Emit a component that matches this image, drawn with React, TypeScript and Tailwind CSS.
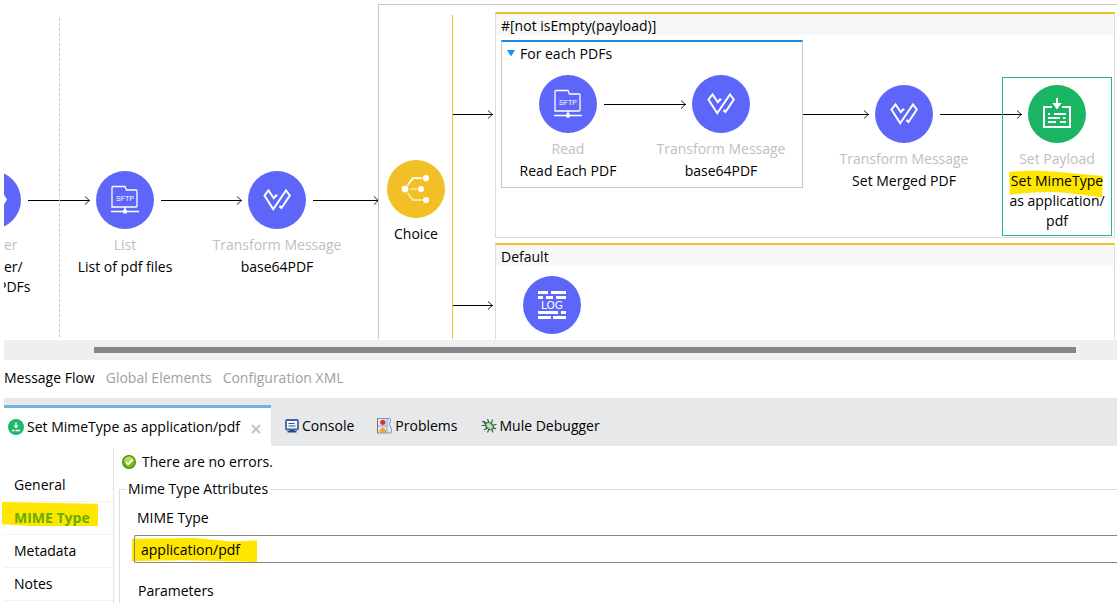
import { useState, type ReactNode } from 'react';
import clsx from 'clsx';

function SftpIcon() {
  return (
    <svg viewBox="0 0 58 58" className="size-full" fill="none" stroke="white">
      <path d="M16 36V16.5a1 1 0 0 1 1-1h12l1.5 3.5H40a1 1 0 0 1 1 1V35a1 1 0 0 1-1 1Z" strokeWidth="1.3" />
      <path d="M29 36v3M15 40.5h28" strokeWidth="1.6" />
      <circle cx="29" cy="40.5" r="2.2" fill="white" stroke="none" />
      <text
        x="29"
        y="30"
        fontSize="7"
        textAnchor="middle"
        fill="white"
        stroke="none"
        fontFamily="'Liberation Sans', sans-serif"
      >
        SFTP
      </text>
    </svg>
  );
}

function TransformIcon() {
  return (
    <svg viewBox="0 0 58 58" className="size-full" fill="none" stroke="white" strokeWidth="2">
      <path d="M28.5 24 25.8 27.2 20.5 19.5 16.5 24.5 25.2 38.3 38 19.5 41.8 24.5 33.5 37 32 35.5" />
      <circle cx="28.3" cy="24.6" r="1.2" fill="white" stroke="none" />
      <circle cx="32.3" cy="35.6" r="1.2" fill="white" stroke="none" />
    </svg>
  );
}

function ChoiceIcon() {
  return (
    <svg viewBox="0 0 58 58" className="size-full" fill="none" stroke="white" strokeWidth="1.8">
      <path d="M20.5 25 26 18.2h9" />
      <path d="M23 29h7" opacity="0.5" />
      <path d="M20.5 33 26 40h9" opacity="0.6" />
      <g fill="white" stroke="none">
        <circle cx="18" cy="29" r="3.4" />
        <circle cx="34" cy="29" r="3" />
        <circle cx="39" cy="18.2" r="3.1" />
        <circle cx="39" cy="40" r="3.1" />
      </g>
    </svg>
  );
}

function LogIcon() {
  return (
    <svg viewBox="0 0 58 58" className="size-full" fill="white">
      <path d="M15 15h10v3H15zM28 15h15v3H28zM15 20h5v3h-5zM23 20h7v3h-7zM33 20h10v3H33z" />
      <path d="M15 35h20v3H15zM38 35h5v3h-5zM15 40h13v3H15zM30 40h13v3H30z" />
      <text x="29" y="33" fontSize="10.5" textAnchor="middle" fontFamily="'DejaVu Sans', sans-serif">
        LOG
      </text>
    </svg>
  );
}

function PayloadIcon() {
  return (
    <svg viewBox="0 0 58 58" className="size-full" fill="none" stroke="white">
      <path d="M24 22h-8v20h26V22h-8" strokeWidth="2" />
      <path d="M29 13v6" strokeWidth="2" />
      <path d="M24.3 18h9.4L29 24.5Z" fill="white" stroke="none" />
      <path d="M20 29h2M26 29h12M20 33h12M35 33h2.5M20 37h8M32 37h6" strokeWidth="1.8" />
    </svg>
  );
}

function ListenerIcon() {
  return (
    <svg viewBox="0 0 58 58" className="size-full" fill="white">
      <path d="M36 28h4v-6l4 6.5-4 6.5v-5h-4z" />
    </svg>
  );
}

interface FlowNodeProps {
  className?: string;
  color?: string;
  icon: ReactNode;
  type?: string;
  name?: ReactNode;
  selected?: boolean;
}

// Labels are wider than the circle and spill evenly over both sides
function FlowNode({ className, color = 'bg-[#5e66f9]', icon, type, name, selected }: FlowNodeProps) {
  return (
    <div
      className={clsx(
        'relative flex w-[58px] shrink-0 flex-col items-center text-center whitespace-nowrap',
        className
      )}
    >
      <div className={clsx('size-[58px] rounded-full', color)}>{icon}</div>
      {type && <div className="mt-1.5 -mb-1 leading-5 text-[#c0c0c0]">{type}</div>}
      {name && <div className="relative isolate mt-1.5 leading-5">{name}</div>}
      {selected && <div className="absolute -inset-x-[26px] -top-2 -bottom-[5px] border border-[#1ab69e]" />}
    </div>
  );
}

function Arrow({ className }: { className: string }) {
  return (
    <div className={clsx('flex h-[59px] shrink-0 items-center', className)}>
      <div className="h-px flex-1 bg-black" />
      <svg viewBox="0 0 6 9" className="-ml-1.5 h-[9px] w-1.5" fill="none" stroke="#222">
        <path d="M1 .5 5.3 4.5 1 8.5" />
      </svg>
    </div>
  );
}

function Route({ title, children }: { title: string; children: ReactNode }) {
  return (
    <section className="min-w-0 flex-1 border border-t-2 border-[#dcdcdc] border-t-[#f2bf27]">
      <h2 className="h-[21px] bg-[#f8f8f8] px-[5px] leading-6">{title}</h2>
      {children}
    </section>
  );
}

// marker pen stroke behind a piece of text
function Marker({ className, d }: { className: string; d: string }) {
  return (
    <svg
      viewBox="0 0 100 28"
      preserveAspectRatio="none"
      className={clsx('absolute -z-10', className)}
      fill="#ffe600"
      aria-hidden="true"
    >
      <path d={d} />
    </svg>
  );
}

function FlowCanvas() {
  return (
    <div className="relative ml-1 flex h-[339px] items-start overflow-hidden">
      <div className="absolute left-[55px] top-[18px] h-[319px] border-l border-dashed border-[#c8c8c8]" />

      <div className="flex pt-[171px]">
        <div className="w-[17px] leading-5 whitespace-nowrap">
          <div className="flex h-[58px] justify-end">
            <div className="size-[58px] shrink-0 rounded-full bg-[#5e66f9]">
              <ListenerIcon />
            </div>
          </div>
          <div className="mt-1.5 text-[#c0c0c0]">er</div>
          <div className="mt-0.5">er/</div>
          <div className="-ml-1.5">PDFs</div>
        </div>
        <Arrow className="ml-[7px] mr-1.5 w-[62px]" />
        <FlowNode icon={<SftpIcon />} type="List" name="List of pdf files" />
        <Arrow className="ml-[7px] mr-1.5 w-[81px]" />
        <FlowNode icon={<TransformIcon />} type="Transform Message" name="base64PDF" />
        <Arrow className="ml-[7px] -mr-px w-[66px]" />
      </div>

      {/* Choice scope */}
      <div className="mt-1 flex h-full min-w-0 flex-1 border-l border-t border-[#c8c8c8]">
        <FlowNode className="mx-2 pt-[155px]" color="bg-[#f2bf27]" icon={<ChoiceIcon />} name="Choice" />
        <div className="mt-2.5 -ml-px w-px bg-[#f2bf27]" />

        <div className="flex min-w-0 flex-1 flex-col gap-[5px] pt-[7px] pr-0.5">
          <div className="flex">
            <Arrow className="mt-[73px] mr-0.5 w-10" />
            <Route title="#[not isEmpty(payload)]">
              <div className="flex items-start pt-[5px] pb-1.5 pl-[5px]">
                <section className="shrink-0 border border-t-2 border-[#c8c8c8] border-t-[#1e88e5] pb-1.5">
                  <h3 className="flex h-[33px] items-start gap-[5px] pl-[5px] leading-6">
                    <svg viewBox="0 0 8 7" className="mt-2 h-[7px] w-2" fill="#0c95ff">
                      <path d="M0 0h8L4 6.5Z" />
                    </svg>
                    For each PDFs
                  </h3>
                  <div className="flex pr-[52px] pl-[37px]">
                    <FlowNode icon={<SftpIcon />} type="Read" name="Read Each PDF" />
                    <Arrow className="ml-[7px] mr-1.5 w-[82px]" />
                    <FlowNode icon={<TransformIcon />} type="Transform Message" name="base64PDF" />
                  </div>
                </section>
                <div className="flex pt-[45px]">
                  <Arrow className="mr-1.5 w-[66px]" />
                  <FlowNode icon={<TransformIcon />} type="Transform Message" name="Set Merged PDF" />
                  <Arrow className="ml-[7px] mr-1.5 w-[82px]" />
                  <FlowNode
                    selected
                    color="bg-[#1ab562]"
                    icon={<PayloadIcon />}
                    type="Set Payload"
                    name={
                      <>
                        <Marker
                          className="-top-px left-0 h-7 w-[94px]"
                          d="M0 2C25-1 55 2 75 4Q90 5 100 6L99 27C80 26 65 22 45 22Q20 22 1 25Z"
                        />
                        Set MimeType
                        <br />
                        as application/
                        <br />
                        pdf
                      </>
                    }
                  />
                </div>
              </div>
            </Route>
          </div>

          <div className="flex">
            <Arrow className="mt-[33px] mr-0.5 w-10" />
            <Route title="Default">
              <div className="pt-2.5 pb-5 pl-[27px]">
                <FlowNode icon={<LogIcon />} />
              </div>
            </Route>
          </div>
        </div>
      </div>
    </div>
  );
}

function SetPayloadTabIcon() {
  return (
    <svg viewBox="0 0 16 16" className="size-4" fill="none" stroke="white">
      <circle cx="8" cy="8" r="8" fill="#1dba66" stroke="none" />
      <path d="M8 3.5v4M4 11.5h2.5M7.5 11.5h4.5" strokeWidth="1.3" />
      <path d="M5.3 6.5h5.4L8 9.5Z" fill="white" stroke="none" />
    </svg>
  );
}

function ConsoleIcon() {
  return (
    <svg viewBox="0 0 14 14" className="size-3.5" fill="none">
      <rect x="1" y="1" width="12" height="9.5" rx="1" fill="#f4f7fd" stroke="#3c64a6" strokeWidth="1.8" />
      <path d="M3.5 4.5h6M3.5 7h7" stroke="#3a4f86" />
      <path d="M4.5 11h5v1h2v1.5h-9V12h2z" fill="#274d80" />
    </svg>
  );
}

function ProblemsIcon() {
  return (
    <svg viewBox="0 0 15 16" className="h-4 w-[15px]" fill="none">
      <path d="M.5.5h12.5q1.5 1 0 3.5t.5 5 .5 6H.5Z" fill="#dfe9f8" stroke="#8494b4" />
      <path d="M.5.5V15.500" stroke="#8c6a5a" />
      <path d="M10 1v14M1 8h9" stroke="#8fa4cc" />
      <circle cx="5.8" cy="4.3" r="2.6" fill="#dd2c38" />
      <path d="M5.8 9.5 8.5 12v2.5H3.100V12Z" fill="#f5a623" stroke="#e9a03a" />
    </svg>
  );
}

function BugIcon() {
  return (
    <svg viewBox="0 0 16 16" className="size-4" fill="none" stroke="#2f5b50" strokeWidth="1.1">
      <path d="M5 5 1 3.5M5 7.5H.5M6 10l-3 2M8 11l-1.5 3.5M11 12l1 2.5M8 4.5 6.5 1M10.5 5l1-3.5M12 7l3.5-.5M12.5 9.5 15 11M4 6 3 3" />
      <ellipse cx="8.5" cy="8" rx="4.5" ry="3.2" transform="rotate(40 8.5 8)" fill="#9fd18b" />
      <path d="M6.5 6.5 10 9.5" stroke="#e4f5d8" />
    </svg>
  );
}

function NoErrorsIcon() {
  return (
    <svg viewBox="0 0 14 14" className="size-3.5" fill="none">
      <circle cx="7" cy="7" r="6.3" fill="#7cba13" stroke="#4f8508" strokeWidth="1.3" />
      <path d="M2 6a5 4.5 0 0 1 10 0Q7 8 2 6Z" fill="#b3de52" />
      <path d="M3.8 6.8 6.2 9.3 10.5 4.8" stroke="white" strokeWidth="1.9" />
    </svg>
  );
}

const editorTabs = ['Message Flow', 'Global Elements', 'Configuration XML'];

const viewTabs = [
  { label: 'Console', icon: <ConsoleIcon /> },
  { label: 'Problems', icon: <ProblemsIcon /> },
  { label: 'Mule Debugger', icon: <BugIcon /> },
];

const sections = ['General', 'MIME Type', 'Metadata', 'Notes'];

export default function App() {
  const [editorTab, setEditorTab] = useState('Message Flow');
  const [section, setSection] = useState('MIME Type');
  const [mimeType, setMimeType] = useState('application/pdf');

  return (
    <div className="flex min-h-screen flex-col overflow-hidden bg-white font-['Open_Sans','Noto_Sans',sans-serif] text-sm text-black">
      <FlowCanvas />

      <div className="mt-px ml-1 flex h-5 items-center bg-[#efefef] pr-[41px] pl-[90px]">
        <div className="h-1.5 flex-1 bg-[#868686]" />
      </div>

      <nav className="ml-1 flex h-[38px] items-center gap-[11px] pb-0.5">
        {editorTabs.map((tab) => (
          <button
            key={tab}
            type="button"
            onClick={() => setEditorTab(tab)}
            className={tab === editorTab ? 'text-black' : 'text-[#a0a0a0]'}
          >
            {tab}
          </button>
        ))}
      </nav>

      <div className="ml-1 flex h-12 items-end bg-[#e7e8ea]">
        <div className="flex h-[41px] w-[267px] items-center justify-between border-t-3 border-[#6bb5de] bg-white pr-2.5 pl-1">
          <button type="button" className="flex items-center gap-[3px] whitespace-nowrap">
            <SetPayloadTabIcon />
            Set MimeType as application/pdf
          </button>
          <button type="button" aria-label="Close" className="pt-1">
            <svg viewBox="0 0 10 10" className="size-2.5" stroke="#c4c4c4" strokeWidth="2">
              <path d="M1 1l8 8M9 1 1 9" />
            </svg>
          </button>
        </div>
        <div className="flex h-[41px] items-center gap-[23px] pl-3.5">
          {viewTabs.map(({ label, icon }) => (
            <button key={label} type="button" className="flex items-center gap-[3px]">
              {icon}
              {label}
            </button>
          ))}
        </div>
      </div>

      <div className="ml-1 flex flex-1 pt-0.5">
        <nav className="w-[110px] shrink-0 border-r border-[#e4e4e4] pt-[21px]">
          {sections.map((item) => (
            <button
              key={item}
              type="button"
              onClick={() => setSection(item)}
              className={clsx(
                'relative isolate block h-[33px] w-full border-b border-[#f2f2f2] pl-2.5 text-left',
                item === section && 'font-bold text-[#62b000]'
              )}
            >
              {item === section && (
                <Marker className="-left-0.5 top-0 h-6 w-24" d="M0 0 38 1 100 2V28H30L0 26Z" />
              )}
              {item}
            </button>
          ))}
        </nav>

        <main className="flex flex-1 flex-col pl-[5px]">
          <div className="flex h-[29px] items-center gap-1.5 pb-px pl-[3px]">
            <NoErrorsIcon />
            There are no errors.
          </div>
          <fieldset className="flex-1 border-t border-l border-[#dcdcdc] pl-3.5">
            <legend className="-ml-2 px-0.5 leading-6">Mime Type Attributes</legend>
            <label htmlFor="mime" className="mt-[5px] block pl-[3px] leading-6">
              MIME Type
            </label>
            <div className="relative isolate mt-[5px]">
              <Marker className="-left-0.5 top-[3px] h-6 w-[125px]" d="M0 1 50 0 80 4 100 3V28L72 27 40 26 0 27Z" />
              <input
                id="mime"
                value={mimeType}
                onChange={(e) => setMimeType(e.target.value)}
                className="h-7 w-full rounded-l-xs border border-r-0 border-[#868686] bg-transparent pl-1.5 outline-none"
              />
            </div>
            <h4 className="mt-4 pl-1 leading-6">Parameters</h4>
          </fieldset>
        </main>
      </div>
    </div>
  );
}
